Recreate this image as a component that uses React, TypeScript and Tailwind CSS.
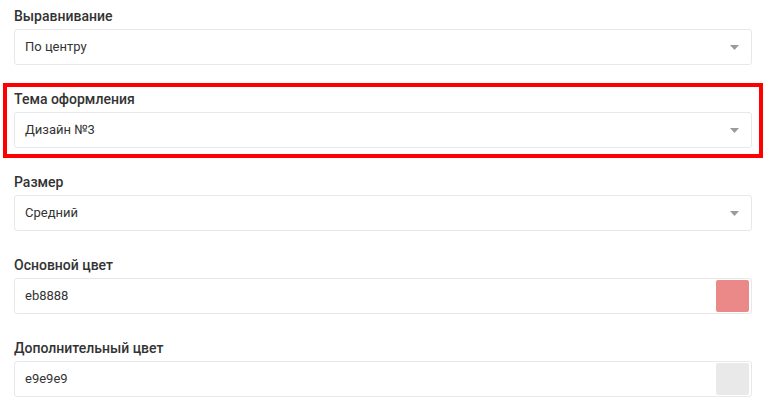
import React from 'react'

type Field =
  | { label: string; kind: 'select'; value: string; highlight?: boolean }
  | { label: string; kind: 'color'; value: string }

const fields: Field[] = [
  { label: 'Выравнивание', kind: 'select', value: 'По центру' },
  { label: 'Тема оформления', kind: 'select', value: 'Дизайн №3', highlight: true },
  { label: 'Размер', kind: 'select', value: 'Средний' },
  { label: 'Основной цвет', kind: 'color', value: 'eb8888' },
  { label: 'Дополнительный цвет', kind: 'color', value: 'e9e9e9' },
]

const Caret = () => (
  <svg width="9" height="5" viewBox="0 0 9 5" className="shrink-0">
    <path d="M0 0h9L4.5 5z" fill="#9a9a9a" />
  </svg>
)

export default function App() {
  return (
    <div
      className="min-h-screen bg-white pl-[14px] pr-[15px] pt-[6px]"
      style={{ fontFamily: 'Roboto, "Noto Sans", sans-serif' }}
    >
      <div className="flex flex-col gap-[24px]">
        {fields.map((f) => (
          <div key={f.label} className="relative">
            {'highlight' in f && f.highlight && (
              // annotation frame drawn over the group
              <div className="pointer-events-none absolute -left-[11px] -right-[11px] -top-[6px] -bottom-[10px] border-4 border-[#ff0000]" />
            )}
            <div className="mb-[3px] text-[14px] leading-5 font-medium text-[#333]">{f.label}</div>
            {f.kind === 'select' ? (
              <div className="flex h-[36px] items-center justify-between rounded-[3px] border border-[#e8e8ec] bg-white pl-[10px] pr-[12px]">
                <span className="text-[13px] text-[#333]">{f.value}</span>
                <Caret />
              </div>
            ) : (
              <div className="flex h-[36px] items-center justify-between rounded-[3px] border border-[#e8e8ec] bg-white pl-[10px] pr-[2px]">
                <span className="text-[13px] text-[#333]">{f.value}</span>
                <span
                  className="h-[32px] w-[33px] rounded-[2px]"
                  style={{ backgroundColor: '#' + f.value }}
                />
              </div>
            )}
          </div>
        ))}
      </div>
    </div>
  )
}
